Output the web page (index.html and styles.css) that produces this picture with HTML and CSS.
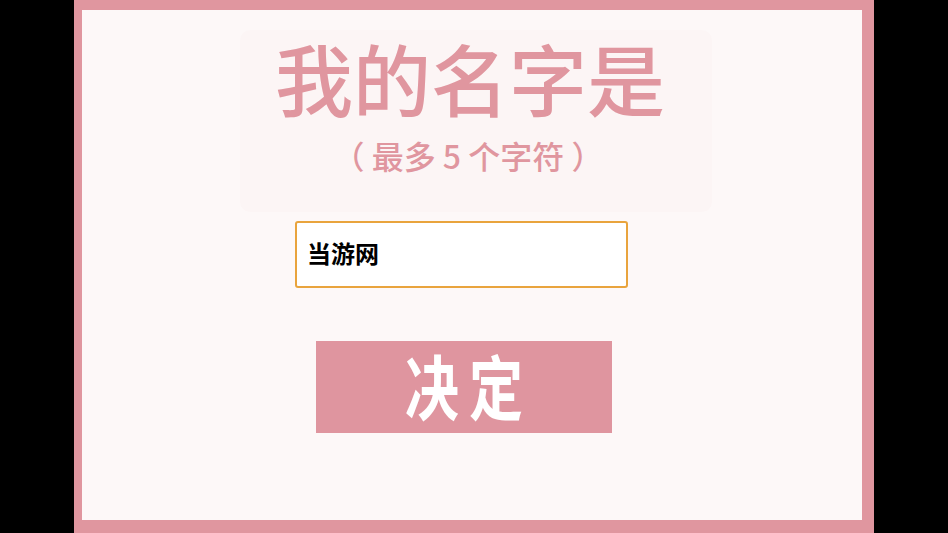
FILE: index.html
```html
<!DOCTYPE html>
<html lang="zh">
<head>
<meta charset="utf-8">
<title>我的名字是</title>
<link rel="stylesheet" href="styles.css">
</head>
<body>
<div class="frame">
  <div class="panel">
    <h1 class="title">我的名字是</h1>
    <p class="hint">（ 最多 5 个字符 ）</p>
  </div>
  <input class="name-input" type="text" value="当游网" maxlength="5">
  <button class="confirm" type="button"><span class="confirm-label">决定</span></button>
</div>
</body>
</html>
```
FILE: styles.css
```css
html, body {
  margin: 0;
  padding: 0;
  background: #000;
  height: 100%;
}
body {
  font-family: "Noto Sans CJK SC", "Noto Sans", sans-serif;
}
.frame {
  box-sizing: border-box;
  width: 800px;
  height: 533px;
  margin-left: 74px;
  border-style: solid;
  border-color: #e0969f;
  border-width: 10px 12px 13px 8px;
  background: #fdf8f8;
  display: flex;
  flex-direction: column;
  align-items: flex-start;
}
.panel {
  box-sizing: border-box;
  width: 472px;
  height: 182px;
  margin: 20px 0 0 158px;
  padding-top: 8px;
  background: #fcf5f5;
  border-radius: 10px;
  text-align: center;
}
.title {
  margin: 0;
  font-size: 78px;
  line-height: 78px;
  font-weight: 500;
  color: #e0969f;
  padding-right: 12px;
}
.hint {
  margin: 23px 0 0;
  font-size: 32px;
  line-height: 32px;
  font-weight: 500;
  color: #e0969f;
  padding-right: 16px;
}
.name-input {
  box-sizing: border-box;
  width: 333px;
  height: 67px;
  margin: 9px 0 0 213px;
  padding: 0 0 4px 10px;
  border: 2px solid #e9a43d;
  border-radius: 3px;
  background: #fff;
  outline: none;
  font-family: "Noto Sans CJK SC", sans-serif;
  font-size: 24px;
  font-weight: 700;
  color: #000;
}
.confirm {
  box-sizing: border-box;
  width: 296px;
  height: 92px;
  margin: 53px 0 0 234px;
  padding: 0 0 4px 0;
  border: none;
  background: #df959f;
  color: #fff;
  font-family: "Noto Sans CJK SC", sans-serif;
  font-size: 54px;
  font-weight: 700;
  line-height: 1;
  display: flex;
  align-items: center;
  justify-content: center;
}
.confirm-label {
  display: inline-block;
  letter-spacing: 10px;
  margin-right: -10px;
  transform: scaleY(1.3);
}
```
